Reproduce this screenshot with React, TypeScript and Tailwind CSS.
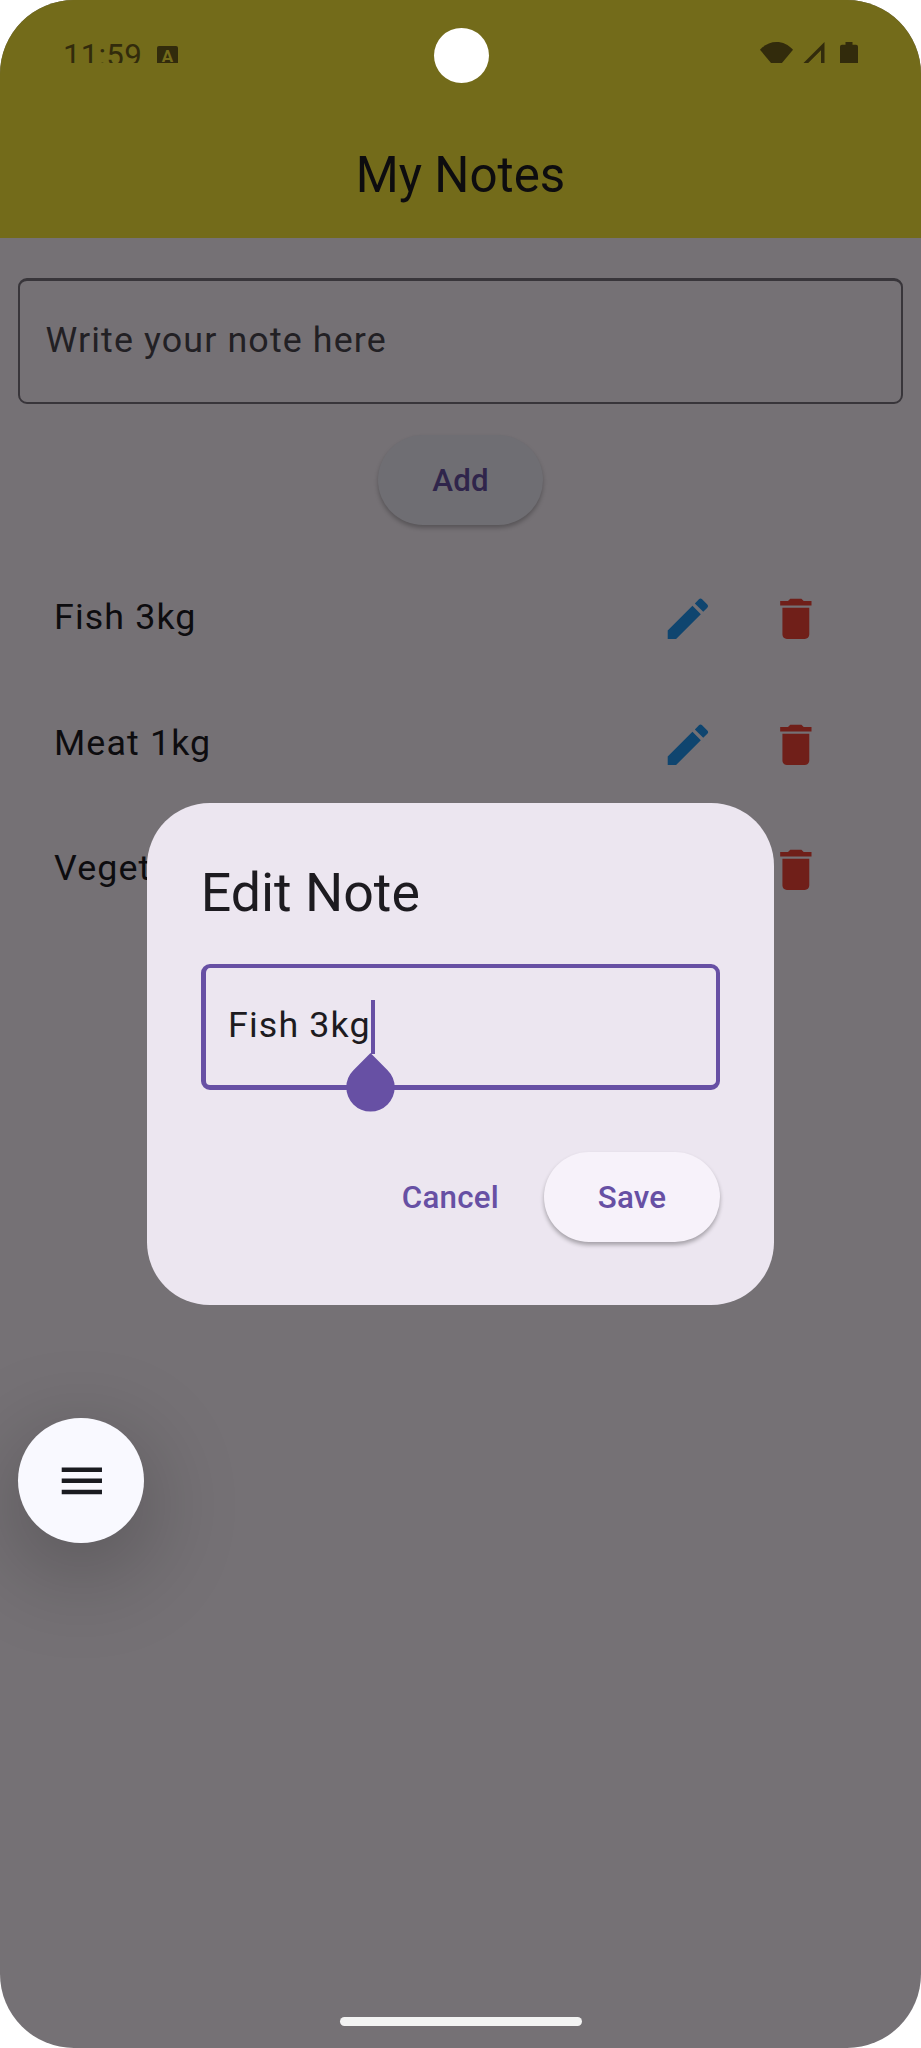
import React from "react";

const notes = ["Fish 3kg", "Meat 1kg", "Vegetables"];

function EditIcon() {
  return (
    <svg viewBox="0 0 24 24" className="size-[53.7px] fill-[#0f456f]">
      <path d="M3 17.25V21h3.75L17.81 9.94l-3.75-3.75L3 17.25zM20.71 7.04a.996.996 0 0 0 0-1.41l-2.34-2.34a.996.996 0 0 0-1.41 0l-1.83 1.83 3.75 3.75 1.83-1.83z" />
    </svg>
  );
}

function DeleteIcon() {
  return (
    <svg viewBox="0 0 24 24" className="size-[53.7px] fill-[#701f19]">
      <path d="M6 19c0 1.1.9 2 2 2h8c1.1 0 2-.9 2-2V7H6v12zM19 4h-3.5l-1-1h-5l-1 1H5v2h14V4z" />
    </svg>
  );
}

function StatusBar() {
  return (
    <div className="flex h-[63px] items-start justify-between overflow-hidden pl-[63px] pr-[63px] text-[#322b0c]">
      <div className="flex items-start">
        <span className="mt-[38px] w-[78px] whitespace-nowrap text-[31.3px] leading-[36px] tracking-[0.2px]">11:59</span>
        <span className="ml-[16px] mt-[46px] flex h-[21px] w-[21px] items-start justify-center rounded-[2px] bg-[#322b0c] pt-[1px] text-[17px] font-bold leading-[18px] text-[#756c1b]">
          A
        </span>
      </div>
      <div className="flex items-start pt-[42px]">
        <svg className="h-[27px] w-[33px]" viewBox="0 0 33 27" fill="currentColor">
          <path d="M0 7.8C9-2.6 24-2.6 33 7.8L16.5 27.500Z" />
        </svg>
        <svg className="ml-[10px] h-[27px] w-[22px]" viewBox="0 0 22 27" fill="currentColor">
          <path d="M-4 25.500 21.500 0V25.500H18V8.200L.7 25.500Z" />
        </svg>
        <svg className="ml-[15px] h-[27px] w-[18px]" viewBox="0 0 18 27" fill="currentColor">
          <path d="M5.500 0h7v2.700H16q2 0 2 2v22.300H0V4.700q0-2 2-2h3.500Z" />
        </svg>
      </div>
    </div>
  );
}

function EditDialog() {
  return (
    <div className="absolute left-[147px] top-[803px] flex h-[501.600px] w-[627px] flex-col rounded-[62.700px] bg-[#ece6f0] px-[53.700px] pt-[53.700px]">
      <h2 className="h-[71.600px] text-[53.700px] leading-[71.600px] text-[#1d1b20]">Edit Note</h2>
      <div className="relative mt-[35.800px] flex h-[125.500px] items-center rounded-[9px] border-b-[5px] border-l-[5px] border-r-[4px] border-t-[4px] border-[#6750a4] pl-[22.400px]">
        <span className="text-[35.800px] leading-[53.700px] tracking-[1.120px] text-[#1d1b20]">Fish 3kg</span>
        <span className="absolute left-[165px] top-[32px] h-[54px] w-[4.500px] bg-[#6750a4]" />
        <svg className="absolute left-[140px] top-[84px] h-[62px] w-[49px]" viewBox="0 0 49 62" fill="#6750a4">
          <path d="M24.500 1 41.600 18.200A24.200 24.200 0 1 1 7.400 18.200Z" />
        </svg>
      </div>
      <div className="mt-[62.500px] flex h-[89.500px] items-center justify-end gap-[18px] text-[31.300px] font-medium tracking-[0.220px] text-[#6750a4]">
        <button className="flex h-full items-center px-[26.900px] pt-[3px]">Cancel</button>
        <button className="flex h-full w-[176.500px] items-center justify-center rounded-full bg-[#f7f2fa] pt-[3px] shadow-[0_3px_4px_rgba(0,0,0,0.3)]">
          Save
        </button>
      </div>
    </div>
  );
}

export default function App() {
  return (
    <div className="h-[2048px] w-[921px] overflow-hidden bg-white font-['Roboto',sans-serif]">
      <main className="relative flex h-[2048px] flex-col overflow-hidden rounded-[74px] bg-[#757175]">
        <header className="h-[238px] bg-[#736b1a]">
          <StatusBar />
          <h1 className="mt-[81px] text-center text-[49.250px] leading-[62px] text-[#0d0c0f]">My Notes</h1>
        </header>

        <div className="mx-[18px] mt-[40px] flex h-[125.600px] items-center rounded-[9px] border-[2px] border-t-[3px] border-[#38353a] pl-[25.500px] text-[35.800px] leading-[53.700px] tracking-[1.120px] text-[#222024]">
          <span className="-mt-px">Write your note here</span>
        </div>

        <button className="mt-[31.400px] flex h-[90px] w-[165px] items-center justify-center self-center rounded-full bg-[#6f6e73] pt-[2px] text-[31.300px] font-medium tracking-[0.220px] text-[#2f254b] shadow-[0_3px_4px_rgba(0,0,0,0.25)]">
          Add
        </button>

        <ul className="mt-[31.400px] flex flex-col">
          {notes.map((note) => (
            <li key={note} className="flex h-[125.400px] items-center pl-[54px] pr-[98px]">
              <span className="-mt-[1.500px] flex-1 text-[35.800px] leading-[53.700px] tracking-[1.120px] text-[#0d0c0f]">{note}</span>
              <div className="flex items-center gap-[54.400px]">
                <EditIcon />
                <DeleteIcon />
              </div>
            </li>
          ))}
        </ul>

        <EditDialog />

        <button className="absolute left-[18px] top-[1418px] flex h-[125px] w-[126px] items-center justify-center rounded-full bg-[#f9f9ff] pl-[1px] shadow-[0_24px_90px_9px_rgba(0,0,0,0.22)]">
          <svg viewBox="0 0 24 24" className="size-[53.700px] fill-[#1a1b20]">
            <path d="M3 18h18v-2H3v2zm0-5h18v-2H3v2zm0-7v2h18V6H3z" />
          </svg>
        </button>

        <span className="absolute left-[433.500px] top-[28px] size-[55px] rounded-full bg-white" />
        <span className="absolute left-[339.500px] top-[2017px] h-[9px] w-[242px] rounded-full bg-[#f3f3f3]" />
      </main>
    </div>
  );
}
